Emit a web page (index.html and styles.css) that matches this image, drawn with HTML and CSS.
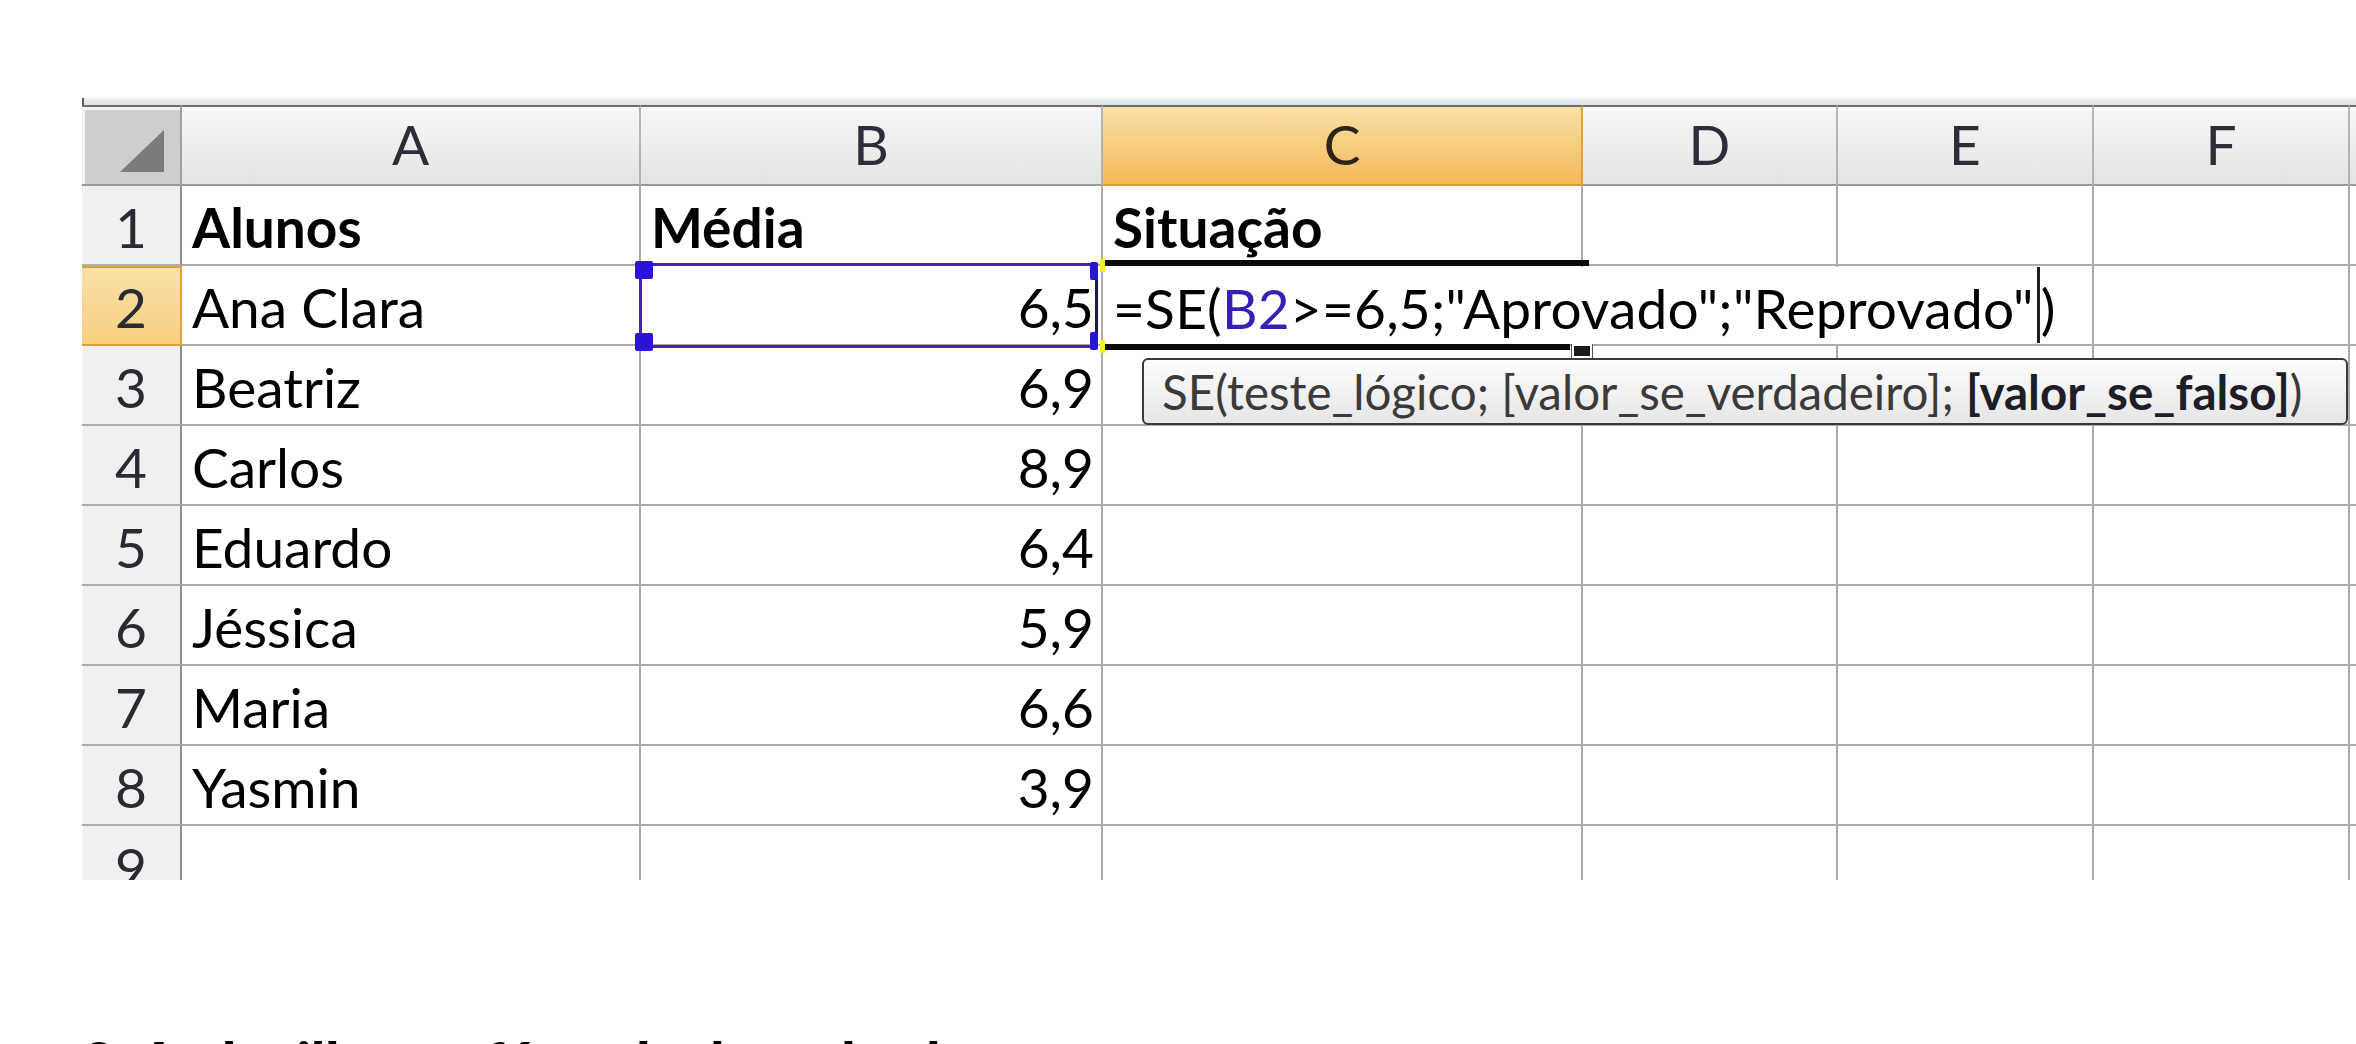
FILE: index.html
```html
<!DOCTYPE html>
<html lang="pt-BR">
<head>
    <meta charset="UTF-8">
    <meta name="viewport" content="width=device-width, initial-scale=1.0">
    <title>Função SE no Excel</title>
    <link rel="stylesheet" href="styles.css">
</head>
<body>
    <div class="page">
        <div class="sheet">
            <div class="sheet-top"></div>
            <div class="grid">
                <!-- cabeçalho das colunas -->
                <div class="corner"><span class="corner-tri"></span></div>
                <div class="col">A</div>
                <div class="col">B</div>
                <div class="col col-active">C</div>
                <div class="col">D</div>
                <div class="col">E</div>
                <div class="col">F</div>
                <div class="col col-rest"></div>

                <div class="rh">1</div>
                <div class="cell bold">Alunos</div>
                <div class="cell bold">Média</div>
                <div class="cell bold">Situação</div>
                <div class="cell"></div>
                <div class="cell"></div>
                <div class="cell"></div>
                <div class="cell"></div>

                <div class="rh rh-active">2</div>
                <div class="cell">Ana Clara</div>
                <div class="cell num ref">
                    6,5
                    <div class="ref-box">
                        <span class="handle h-tl"></span>
                        <span class="handle h-bl"></span>
                        <span class="handle h-tr"></span>
                        <span class="handle h-br"></span>
                    </div>
                </div>
                <div class="cell editing">
                    <span class="active-line line-top"></span>
                    <span class="active-line line-bottom"></span>
                    <span class="fill-handle"></span>
                    <span class="mark mark-top"></span>
                    <span class="mark mark-bottom"></span>
                    <div class="edit-box">=SE(<span class="ref-text">B2</span>&gt;=6,5;"Aprovado";"Reprovado"<span class="caret"></span>)</div>
                    <div class="tip">SE(teste_lógico; [valor_se_verdadeiro]; <b>[valor_se_falso]</b>)</div>
                </div>
                <div class="cell"></div>
                <div class="cell"></div>
                <div class="cell"></div>
                <div class="cell"></div>

                <div class="rh">3</div>
                <div class="cell">Beatriz</div>
                <div class="cell num">6,9</div>
                <div class="cell"></div>
                <div class="cell"></div>
                <div class="cell"></div>
                <div class="cell"></div>
                <div class="cell"></div>

                <div class="rh">4</div>
                <div class="cell">Carlos</div>
                <div class="cell num">8,9</div>
                <div class="cell"></div>
                <div class="cell"></div>
                <div class="cell"></div>
                <div class="cell"></div>
                <div class="cell"></div>

                <div class="rh">5</div>
                <div class="cell">Eduardo</div>
                <div class="cell num">6,4</div>
                <div class="cell"></div>
                <div class="cell"></div>
                <div class="cell"></div>
                <div class="cell"></div>
                <div class="cell"></div>

                <div class="rh">6</div>
                <div class="cell">Jéssica</div>
                <div class="cell num">5,9</div>
                <div class="cell"></div>
                <div class="cell"></div>
                <div class="cell"></div>
                <div class="cell"></div>
                <div class="cell"></div>

                <div class="rh">7</div>
                <div class="cell">Maria</div>
                <div class="cell num">6,6</div>
                <div class="cell"></div>
                <div class="cell"></div>
                <div class="cell"></div>
                <div class="cell"></div>
                <div class="cell"></div>

                <div class="rh">8</div>
                <div class="cell">Yasmin</div>
                <div class="cell num">3,9</div>
                <div class="cell"></div>
                <div class="cell"></div>
                <div class="cell"></div>
                <div class="cell"></div>
                <div class="cell"></div>

                <div class="rh">9</div>
                <div class="cell"></div>
                <div class="cell"></div>
                <div class="cell"></div>
                <div class="cell"></div>
                <div class="cell"></div>
                <div class="cell"></div>
                <div class="cell"></div>
            </div>
        </div>

        <p class="caption">3. A planilha e a fórmula de cada aluno</p>
    </div>
</body>
</html>
```

FILE: styles.css
```css
* {
    box-sizing: border-box;
}

body {
    margin: 0;
    background: #ffffff;
    font-family: Lato, "Open Sans", sans-serif;
    color: #000;
}

.page {
    padding-top: 98px;
}

.sheet {
    margin-left: 82px;
    height: 782px;
    overflow: hidden;
}

.sheet-top {
    height: 7px;
    background: linear-gradient(#eef1f4, #dde2e6);
    border-left: 2px solid #5c5c5c;
}

.grid {
    display: grid;
    grid-template-columns: 100px 459px 462px 480px 255px 256px 256px 1fr;
    grid-template-rows: 81px repeat(9, 80px);
    font-size: 55px;
    line-height: 1;
}

/* cabeçalhos */
.corner {
    display: flex;
    justify-content: flex-end;
    align-items: flex-end;
    padding: 0 16px 12px 0;
    background: #cecece;
    border-top: 2px solid #6c6c6c;
    border-right: 2px solid #a0a0a0;
    border-bottom: 2px solid #9a9a9a;
    box-shadow: inset 3px 3px 0 #f2f2f2;
}

.corner-tri {
    width: 44px;
    height: 42px;
    background: #7b7b7b;
    clip-path: polygon(100% 0, 100% 100%, 0 100%);
}

.col {
    display: flex;
    justify-content: center;
    align-items: flex-end;
    padding-bottom: 12px;
    background: linear-gradient(#f7f7f7, #e4e4e4);
    border-top: 2px solid #6c6c6c;
    border-right: 2px solid #b4b4b4;
    border-bottom: 2px solid #9a9a9a;
    color: #2c2c3a;
}

.col-active {
    background: linear-gradient(#fbe0a8, #f4b958);
    border-right-color: #e2a040;
    border-bottom-color: #de982e;
    color: #2e2416;
}

.col-rest {
    border-right: none;
}

.rh {
    display: flex;
    justify-content: center;
    align-items: flex-end;
    padding-bottom: 9px;
    background: #f0f0f0;
    border-right: 2px solid #8f8f8f;
    border-bottom: 2px solid #adadad;
    color: #2a2a34;
}

.rh-active {
    background: linear-gradient(#fbe1a9, #f8cf80);
    border-bottom-color: #e39f37;
    box-shadow: inset 0 2px 0 #e39f37;
    border-right-color: #e2a040;
}

/* células */
.cell {
    display: flex;
    align-items: flex-end;
    padding: 0 7px 9px 10px;
    background: #fff;
    border-right: 2px solid #ababab;
    border-bottom: 2px solid #ababab;
    white-space: nowrap;
}

.bold {
    font-weight: 700;
}

.num {
    justify-content: flex-end;
}

/* B2 referenciada na fórmula */
.ref {
    position: relative;
}

.ref-box {
    position: absolute;
    left: -2px;
    top: -3px;
    right: 3px;
    bottom: -4px;
    border: 3px solid #4a1fb6;
    border-right-color: #1b1b4a;
}

.handle {
    position: absolute;
    width: 18px;
    height: 18px;
    background: #2a14d8;
    border-radius: 2px;
}

.h-tl { left: -7px; top: -5px; }
.h-bl { left: -7px; bottom: -6px; }
.h-tr { right: -3px; top: -4px; width: 8px; }
.h-br { right: -3px; bottom: -5px; width: 8px; }

/* C2 em edição */
.editing {
    position: relative;
}

.active-line {
    position: absolute;
    left: 2px;
    height: 6px;
    background: #0a0a0a;
}

.line-top {
    top: -6px;
    width: 484px;
}

.line-bottom {
    top: 78px;
    width: 465px;
}

.fill-handle {
    position: absolute;
    left: 469px;
    top: 78px;
    width: 20px;
    height: 14px;
    background: #1a1a1a;
    border: 2px solid #ffffff;
    outline: 1px solid #555;
}

.mark {
    position: absolute;
    left: -3px;
    width: 5px;
    height: 13px;
    background: #f2ee2a;
}

.mark-top { top: -7px; }
.mark-bottom { top: 74px; }

.edit-box {
    position: absolute;
    left: 4px;
    top: 1px;
    width: 950px;
    height: 77px;
    display: flex;
    align-items: flex-end;
    padding: 0 0 8px 6px;
    background: #ffffff;
    white-space: nowrap;
    letter-spacing: 0.2px;
    z-index: 2;
}

.ref-text {
    color: #3b1fb2;
}

.caret {
    align-self: stretch;
    width: 3px;
    margin: 0 1px -7px 3px;
    background: #1c1c2a;
}

.tip {
    position: absolute;
    left: 39px;
    top: 92px;
    width: 1206px;
    height: 67px;
    padding: 8px 18px 0;
    font-size: 47.5px;
    line-height: 1;
    color: #3a3a3a;
    background: linear-gradient(#fdfdfd, #e6e6e6);
    border: 2px solid #3a3a3a;
    border-radius: 6px;
    white-space: nowrap;
    z-index: 3;
}

.tip b {
    color: #1e1e2a;
}

.caption {
    margin: 147px 0 0 82px;
    font-size: 56px;
    font-weight: 900;
    line-height: 1.2;
}
```
